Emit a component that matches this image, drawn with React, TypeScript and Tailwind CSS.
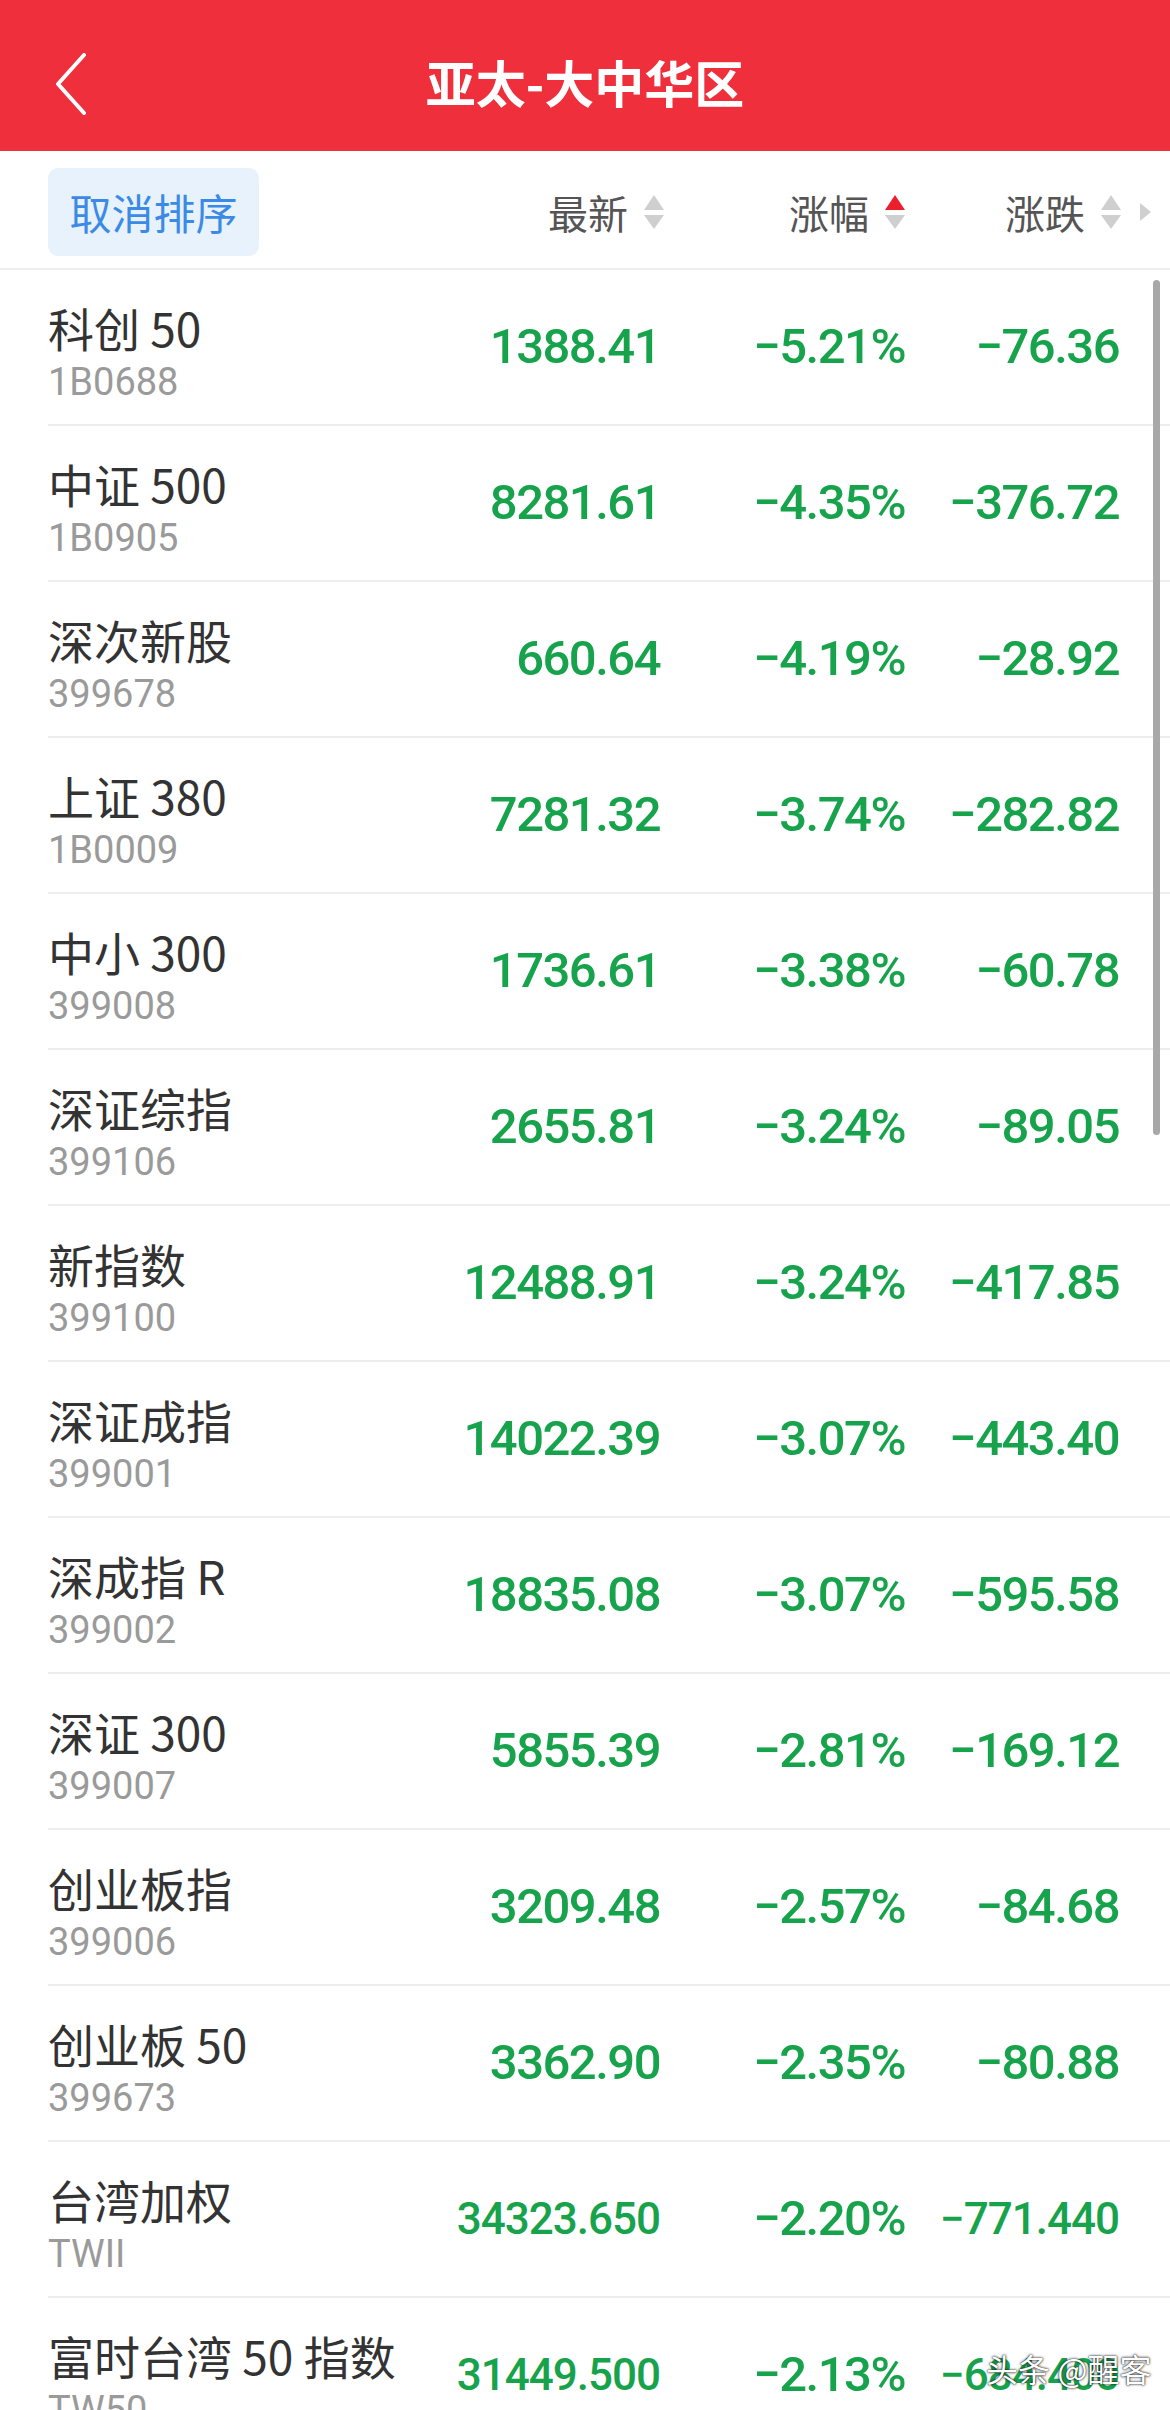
const rows = [
  { name: "科创 50", code: "1B0688", price: "1388.41", pct: "−5.21%", chg: "−76.36" },
  { name: "中证 500", code: "1B0905", price: "8281.61", pct: "−4.35%", chg: "−376.72" },
  { name: "深次新股", code: "399678", price: "660.64", pct: "−4.19%", chg: "−28.92" },
  { name: "上证 380", code: "1B0009", price: "7281.32", pct: "−3.74%", chg: "−282.82" },
  { name: "中小 300", code: "399008", price: "1736.61", pct: "−3.38%", chg: "−60.78" },
  { name: "深证综指", code: "399106", price: "2655.81", pct: "−3.24%", chg: "−89.05" },
  { name: "新指数", code: "399100", price: "12488.91", pct: "−3.24%", chg: "−417.85" },
  { name: "深证成指", code: "399001", price: "14022.39", pct: "−3.07%", chg: "−443.40" },
  { name: "深成指 R", code: "399002", price: "18835.08", pct: "−3.07%", chg: "−595.58" },
  { name: "深证 300", code: "399007", price: "5855.39", pct: "−2.81%", chg: "−169.12" },
  { name: "创业板指", code: "399006", price: "3209.48", pct: "−2.57%", chg: "−84.68" },
  { name: "创业板 50", code: "399673", price: "3362.90", pct: "−2.35%", chg: "−80.88" },
  { name: "台湾加权", code: "TWII", price: "34323.650", pct: "−2.20%", chg: "−771.440", small: true },
  { name: "富时台湾 50 指数", code: "TW50", price: "31449.500", pct: "−2.13%", chg: "−684.400", small: true },
];

const cjk = "font-['Noto_Sans_CJK_SC',sans-serif]";
const num = "font-['Roboto','Noto_Sans_CJK_SC',sans-serif]";

const SortArrows = ({ active }: { active?: boolean }) => (
  <svg width="20" height="36" viewBox="0 0 20 36" className="ml-[16px]">
    <polygon points="10,1 20,16 0,16" fill={active ? "#ec1f2d" : "#cfcfcf"} />
    <polygon points="0,21 20,21 10,35" fill="#cfcfcf" />
  </svg>
);

const HeaderCol = ({ label, width, active }: { label: string; width: string; active?: boolean }) => (
  <div className={`flex items-center justify-end ${width}`}>
    <span className={`${cjk} text-[40px] leading-none text-[#555]`}>{label}</span>
    <SortArrows active={active} />
  </div>
);

const App = () => {
  return (
    <div className="relative w-[1170px] h-[2410px] overflow-hidden bg-white">
      {/* top bar */}
      <header className="relative flex items-center justify-center h-[151px] pt-[10px] bg-[#ef2f3b]">
        <svg width="34" height="62" viewBox="0 0 34 62" className="absolute left-[54px] top-[53px]">
          <polyline points="30,2 4,31 30,60" fill="none" stroke="#fff" strokeWidth="4" strokeLinecap="round" strokeLinejoin="round" />
        </svg>
        <h1 className={`${cjk} text-[50px] font-bold leading-none text-white`}>亚太-大中华区</h1>
      </header>

      {/* sort bar */}
      <div className="flex items-center h-[119px] pt-[4px] border-b-2 border-[#eeeeee]">
        <div className="flex-1 pl-[48px]">
          <button className={`${cjk} flex items-center justify-center w-[211px] h-[88px] rounded-[10px] bg-[#e8f2fd] text-[42px] text-[#3b8be6]`}>
            取消排序
          </button>
        </div>
        <HeaderCol label="最新" width="w-[264px]" />
        <HeaderCol label="涨幅" width="w-[241px]" active />
        <HeaderCol label="涨跌" width="w-[216px]" />
        <div className="w-[49px] flex items-center">
          <svg width="11" height="18" viewBox="0 0 11 18" className="ml-[19px]">
            <polygon points="0,0 11,9 0,18" fill="#d0d0d0" />
          </svg>
        </div>
      </div>

      {/* list */}
      <div className="relative">
        {rows.map((row, index) => {
          const base = `${num} text-right font-medium text-[#17a24c]`;
          const big = "text-[49px] tracking-[-1.5px]";
          const fit = row.small ? "text-[44px] tracking-[-1px]" : big;
          return (
            <div key={index} className="flex items-center h-[156px] ml-[48px] border-b-2 border-[#eeeeee]">
              <div className="flex-1 self-stretch flex flex-col pt-[31px]">
                <p className={`${cjk} text-[46px] leading-[52px] text-[#333] whitespace-nowrap`}>{row.name}</p>
                <p className={`${num} text-[38px] leading-[58px] text-[#9a9a9a]`}>{row.code}</p>
              </div>
              <p className={`w-[260px] ${base} ${fit}`}>{row.price}</p>
              <p className={`w-[245px] ${base} ${big}`}>{row.pct}</p>
              <p className={`w-[214px] ${base} ${fit}`}>{row.chg}</p>
              <div className="w-[51px]" />
            </div>
          );
        })}
        <div className="absolute right-[10px] top-[10px] w-[7px] h-[855px] rounded-full bg-[#a8a8a8]" />
      </div>

      {/* watermark */}
      <div className={`${cjk} absolute left-[986px] top-[2352px] text-[32px] leading-none text-white [text-shadow:0_0_3px_rgba(0,0,0,0.9),0_0_1px_rgba(0,0,0,0.9)]`}>
        头条 @醒客
      </div>
    </div>
  );
};

export default App;
